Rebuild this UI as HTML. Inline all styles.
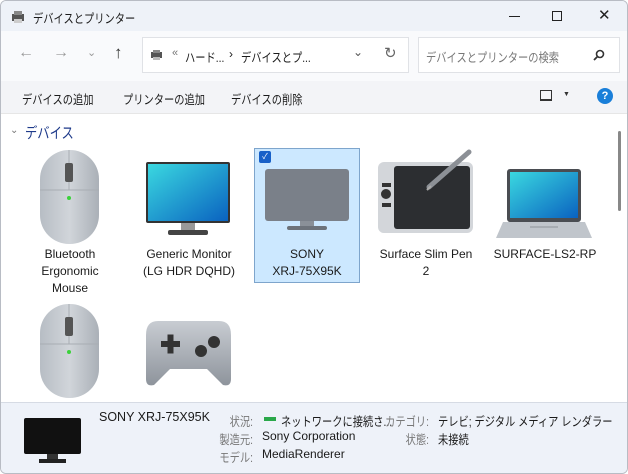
<!DOCTYPE html>
<html><head><meta charset="utf-8"><style>
*{margin:0;padding:0;box-sizing:border-box}
body{width:628px;height:474px;overflow:hidden;font-family:"Liberation Sans","Noto Sans CJK JP",sans-serif;font-size:12px;color:#1a1a1a;background:#fff;position:relative}
.abs{position:absolute;white-space:nowrap}
.n{transform:scaleX(.82);transform-origin:left center;font-size:12.5px}
.r{transform:scaleX(.82);transform-origin:right center;font-size:12.5px}
.win{position:absolute;left:0;top:0;width:628px;height:474px;border:1px solid #b8bcc4;border-radius:6px;overflow:hidden;background:#fff}
.lbl{position:absolute;text-align:center;font-size:12px;line-height:17px;color:#1a1a1a}
</style></head><body>
<div class="win">
<div class="abs" style="left:0;top:0;width:628px;height:30px;background:#eef2f8"></div>
<svg class="abs" style="left:10px;top:9px" width="16" height="14"><rect x="1" y="4" width="12" height="7" fill="#555"/><rect x="3" y="1" width="8" height="4" fill="#888"/><rect x="3" y="9" width="8" height="4" fill="#ccc"/></svg>
<div class="abs n" style="left:32px;top:7px">デバイスとプリンター</div>
<div class="abs" style="left:508px;top:15px;width:11px;height:1px;background:#222"></div>
<div class="abs" style="left:551px;top:10px;width:10px;height:10px;border:1px solid #222"></div>
<div class="abs" style="left:597px;top:5px;font-size:15px;color:#222">✕</div>

<div class="abs" style="left:0;top:30px;width:628px;height:50px;background:#f9fafc"></div>
<div class="abs" style="left:17px;top:43px;color:#999;font-size:16px">←</div>
<div class="abs" style="left:52px;top:43px;color:#999;font-size:16px">→</div>
<div class="abs" style="left:86px;top:45px;color:#999;font-size:11px">⌄</div>
<div class="abs" style="left:113px;top:42px;color:#333;font-size:17px">↑</div>
<div class="abs" style="left:141px;top:36px;width:267px;height:36px;background:#fff;border:1px solid #e0e2e6"></div>
<svg class="abs" style="left:149px;top:48px" width="14" height="12"><rect x="1" y="3" width="11" height="6" fill="#555"/><rect x="3" y="1" width="7" height="3" fill="#888"/><rect x="3" y="8" width="7" height="3" fill="#bbb"/></svg>
<div class="abs" style="left:171px;top:46px;color:#777;font-size:11px">«</div>
<div class="abs n" style="left:184px;top:46px">ハード...</div>
<div class="abs" style="left:228px;top:46px">›</div>
<div class="abs n" style="left:240px;top:46px">デバイスとプ...</div>
<div class="abs" style="left:352px;top:44px;color:#555;font-size:12px">⌄</div>
<div class="abs" style="left:383px;top:43px;color:#666;font-size:15px">↻</div>
<div class="abs" style="left:417px;top:36px;width:202px;height:36px;background:#fff;border:1px solid #e0e2e6"></div>
<div class="abs n" style="left:425px;top:46px;color:#777">デバイスとプリンターの検索</div>
<svg class="abs" style="left:592px;top:48px" width="12" height="12"><circle cx="7" cy="5" r="3.5" fill="none" stroke="#333" stroke-width="1.6"/><line x1="4.5" y1="7.5" x2="1" y2="11" stroke="#333" stroke-width="1.8"/></svg>

<div class="abs" style="left:0;top:80px;width:628px;height:33px;background:#f3f4f7;border-bottom:1px solid #e6e6e6"></div>
<div class="abs n" style="left:21px;top:88px">デバイスの追加</div>
<div class="abs n" style="left:122px;top:88px">プリンターの追加</div>
<div class="abs n" style="left:230px;top:88px">デバイスの削除</div>
<div class="abs" style="left:539px;top:89px;width:12px;height:11px;border:1px solid #333;border-bottom-width:2px"></div>
<div class="abs" style="left:562px;top:90px;font-size:7px;color:#333">▼</div>
<div class="abs" style="left:596px;top:87px;width:16px;height:16px;border-radius:50%;background:#1a7fd9;color:#fff;font-size:11px;font-weight:bold;text-align:center;line-height:16px">?</div>

<div class="abs" style="left:9px;top:124px;color:#777;font-size:10px">⌄</div>
<div class="abs n" style="left:24px;top:121px;color:#1e3a8a;font-size:15px">デバイス</div>
<div class="abs" style="left:617px;top:130px;width:3px;height:80px;background:#888;border-radius:2px"></div>

<svg class="abs" style="left:38px;top:148px" width="61" height="96"><defs><linearGradient id="mg" x1="0" x2="1"><stop offset="0" stop-color="#b7bdc4"/><stop offset=".5" stop-color="#d1d5da"/><stop offset="1" stop-color="#aab0b7"/></linearGradient></defs><rect x="1" y="1" width="59" height="94" rx="29" fill="url(#mg)"/><line x1="30" y1="1" x2="30" y2="41" stroke="#a8adb3"/><line x1="1" y1="41" x2="60" y2="41" stroke="#a8adb3"/><rect x="26" y="14" width="8" height="19" rx="2" fill="#555"/><circle cx="30" cy="49" r="2" fill="#3bd23b"/></svg>
<div class="lbl" style="left:20px;top:245px;width:98px">Bluetooth<br>Ergonomic<br>Mouse</div>
<svg class="abs" style="left:144px;top:160px" width="86" height="75"><defs><linearGradient id="sg" x1="0" y1="0" x2="1" y2="1"><stop offset="0" stop-color="#3ad8e0"/><stop offset="1" stop-color="#0a62c0"/></linearGradient></defs><rect x="1" y="1" width="84" height="61" rx="2" fill="#333"/><rect x="3" y="3" width="80" height="57" fill="url(#sg)"/><rect x="36" y="62" width="14" height="8" fill="#999"/><rect x="23" y="69" width="40" height="5" rx="2" fill="#444"/></svg>
<div class="lbl" style="left:124px;top:245px;width:128px">Generic Monitor<br>(LG HDR DQHD)</div>
<div class="abs" style="left:253px;top:147px;width:106px;height:135px;background:#cce8ff;border:1px solid #7ea5cc"></div>
<div class="abs" style="left:258px;top:150px;width:12px;height:12px;background:#1760c8;color:#fff;font-size:8px;text-align:center;line-height:12px;border-radius:2px">✓</div>
<svg class="abs" style="left:263px;top:167px" width="86" height="63"><rect x="1" y="1" width="84" height="52" rx="3" fill="#7a8089"/><rect x="36" y="53" width="14" height="6" fill="#8a9098"/><rect x="23" y="58" width="40" height="4" rx="2" fill="#6d737b"/></svg>
<div class="lbl" style="left:253px;top:245px;width:106px">SONY<br>XRJ-75X95K</div>
<svg class="abs" style="left:376px;top:148px" width="97" height="85"><rect x="1" y="13" width="95" height="71" rx="6" fill="#d3d6da"/><rect x="17" y="17" width="76" height="63" rx="3" fill="#2c2e31"/><rect x="5" y="34" width="9" height="4" fill="#333"/><circle cx="9" cy="45" r="5" fill="#333"/><rect x="5" y="54" width="9" height="4" fill="#333"/><line x1="52" y1="38" x2="92" y2="3" stroke="#8c9096" stroke-width="5" stroke-linecap="round"/><line x1="50" y1="41" x2="54" y2="37" stroke="#aaa" stroke-width="2"/></svg>
<div class="lbl" style="left:370px;top:245px;width:110px">Surface Slim Pen<br>2</div>
<svg class="abs" style="left:494px;top:167px" width="98" height="72"><defs><linearGradient id="lg" x1="0" y1="0" x2="1" y2="1"><stop offset="0" stop-color="#3ad8e0"/><stop offset="1" stop-color="#0a62c0"/></linearGradient></defs><rect x="12" y="1" width="74" height="53" rx="3" fill="#4a4d52"/><rect x="15" y="4" width="68" height="46" fill="url(#lg)"/><path d="M8 54 H90 L97 70 H1 Z" fill="#c0c5cb"/><rect x="35" y="58" width="28" height="2" fill="#a7acb2"/></svg>
<div class="lbl" style="left:490px;top:245px;width:108px">SURFACE-LS2-RP</div>
<svg class="abs" style="left:38px;top:302px" width="61" height="96"><rect x="1" y="1" width="59" height="94" rx="29" fill="url(#mg)"/><line x1="30" y1="1" x2="30" y2="41" stroke="#a8adb3"/><line x1="1" y1="41" x2="60" y2="41" stroke="#a8adb3"/><rect x="26" y="14" width="8" height="19" rx="2" fill="#555"/><circle cx="30" cy="49" r="2" fill="#3bd23b"/></svg>
<svg class="abs" style="left:143px;top:318px" width="89" height="69"><defs><linearGradient id="gg" x1="0" y1="0" x2="0" y2="1"><stop offset="0" stop-color="#c8ccd2"/><stop offset="1" stop-color="#8e949c"/></linearGradient></defs><path d="M14 2 H75 Q87 2 87 16 V60 Q87 68 79 66 L63 50 H26 L10 66 Q2 68 2 60 V16 Q2 2 14 2 Z" fill="url(#gg)"/><rect x="17" y="22" width="19" height="6" fill="#333"/><rect x="23.5" y="15.5" width="6" height="19" fill="#333"/><circle cx="70" cy="23" r="6" fill="#333"/><circle cx="57" cy="32" r="6" fill="#333"/></svg>

<div class="abs" style="left:0;top:401px;width:628px;height:73px;background:#eef2f9;border-top:1px solid #d6dbe4"></div>
<svg class="abs" style="left:23px;top:417px" width="58" height="46"><rect x="0" y="0" width="57" height="36" rx="2" fill="#111"/><rect x="23" y="36" width="11" height="5" fill="#333"/><rect x="15" y="41" width="27" height="4" fill="#222"/></svg>
<div class="abs" style="left:98px;top:409px;font-size:12.5px">SONY XRJ-75X95K</div>
<div class="abs r" style="left:200px;top:410px;width:52px;text-align:right;color:#777">状況:</div>
<div class="abs" style="left:263px;top:416px;width:12px;height:4px;background:#2aa84a"></div>
<div class="abs n" style="left:280px;top:410px">ネットワークに接続さ...</div>
<div class="abs r" style="left:370px;top:410px;width:58px;text-align:right;color:#777">カテゴリ:</div>
<div class="abs n" style="left:437px;top:410px">テレビ; デジタル メディア レンダラー</div>
<div class="abs r" style="left:200px;top:428px;width:52px;text-align:right;color:#777">製造元:</div>
<div class="abs" style="left:261px;top:428px">Sony Corporation</div>
<div class="abs r" style="left:370px;top:428px;width:58px;text-align:right;color:#777">状態:</div>
<div class="abs n" style="left:437px;top:428px">未接続</div>
<div class="abs r" style="left:200px;top:446px;width:52px;text-align:right;color:#777">モデル:</div>
<div class="abs" style="left:261px;top:446px">MediaRenderer</div>
</div>
</body></html>
